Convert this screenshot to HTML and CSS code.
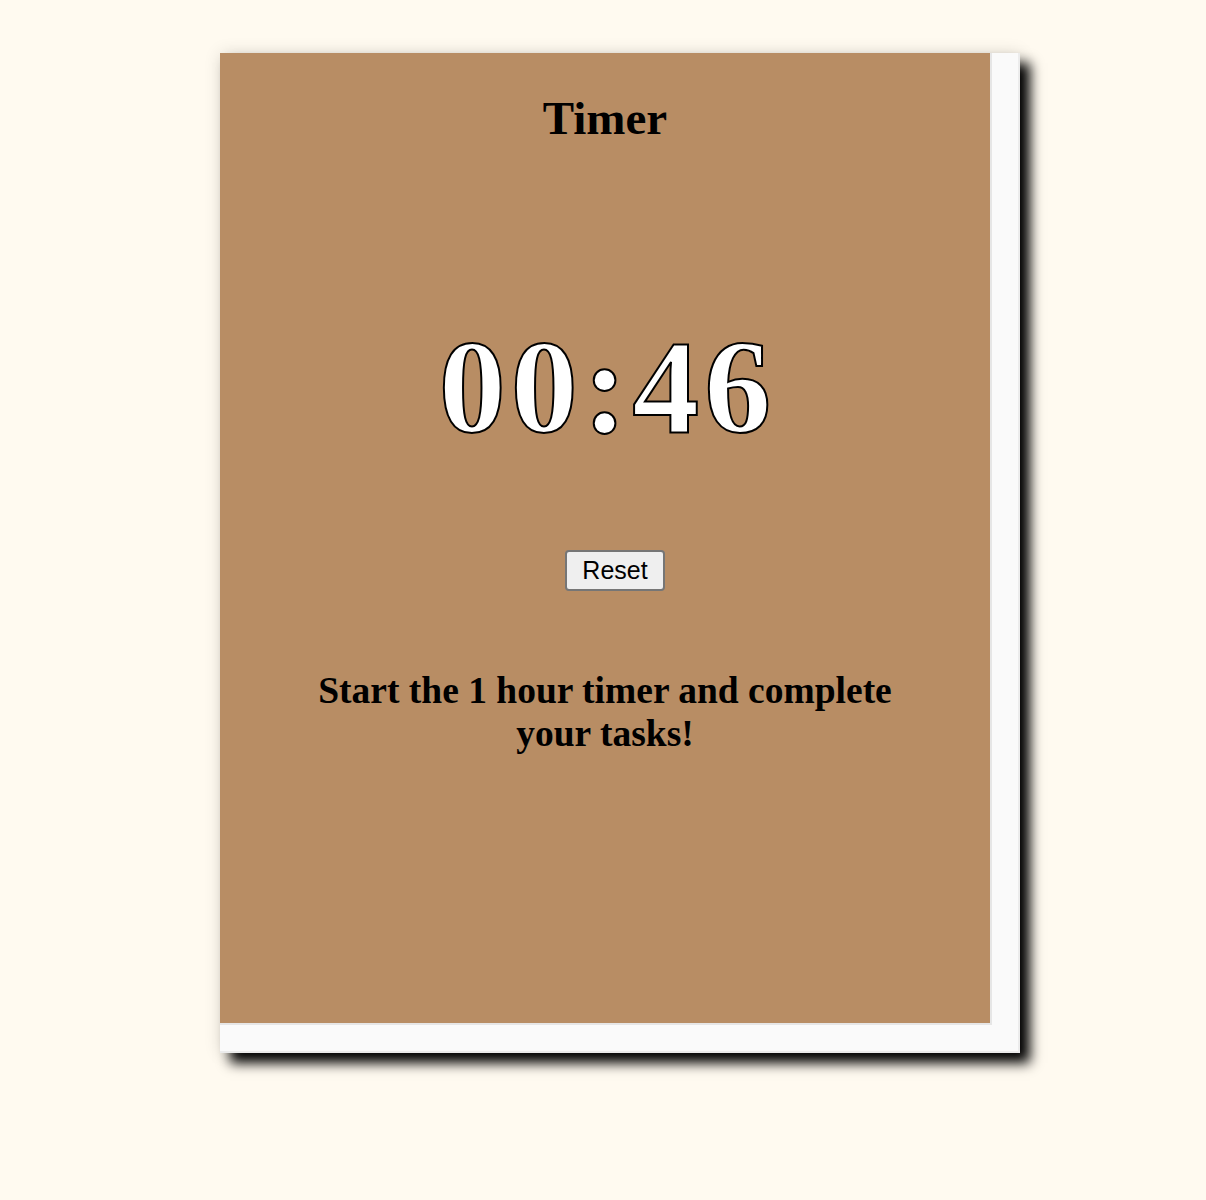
FILE: index.html
```html
<!DOCTYPE html>
<html>
<head>
<meta charset="utf-8">
<title>Timer</title>
<link rel="stylesheet" href="styles.css">
</head>
<body>
<div class="card">
  <div class="panel">
    <h1 class="title">Timer</h1>
    <div class="clock">00:46</div>
    <button class="reset">Reset</button>
    <p class="note">Start the 1 hour timer and complete your tasks!</p>
  </div>
</div>
</body>
</html>
```
FILE: styles.css
```css
html, body {
  margin: 0;
  padding: 0;
  background: #fffaf0;
}
body {
  padding: 53px 0 120px 220px;
  font-family: "Liberation Serif", "Times New Roman", serif;
}
.card {
  width: 772px;
  height: 972px;
  padding: 0 26px 26px 0;
  background: #fafafa;
  border-right: 2px solid #ececec;
  border-bottom: 2px solid #ececec;
  box-shadow: 10px 10px 12px #000, 0 0 16px rgba(0, 0, 0, 0.12);
}
.panel {
  width: 770px;
  height: 970px;
  background: #b88d64;
  border-right: 2px solid #e6e6e6;
  border-bottom: 2px solid #e6e6e6;
  display: flex;
  flex-direction: column;
  align-items: center;
}
.title {
  margin: 38px 0 0;
  font-size: 47px;
  font-weight: bold;
  color: #000;
  line-height: 54px;
}
.clock {
  margin-top: 165px;
  padding-left: 5px;
  font-size: 134px;
  font-weight: bold;
  letter-spacing: 5px;
  line-height: 154px;
  color: #fff;
  -webkit-text-stroke: 2px #000;
}
.reset {
  margin: 86px 0 0 20px;
  padding: 5px 15px;
  font-family: "Liberation Sans", Arial, sans-serif;
  font-size: 25px;
  line-height: 27px;
  color: #000;
  background: #efefef;
  border: 2px solid #767676;
  border-radius: 4px;
}
.note {
  margin: 78px 0 0;
  max-width: 620px;
  text-align: center;
  font-size: 37.5px;
  font-weight: bold;
  line-height: 43px;
  color: #000;
}
```
